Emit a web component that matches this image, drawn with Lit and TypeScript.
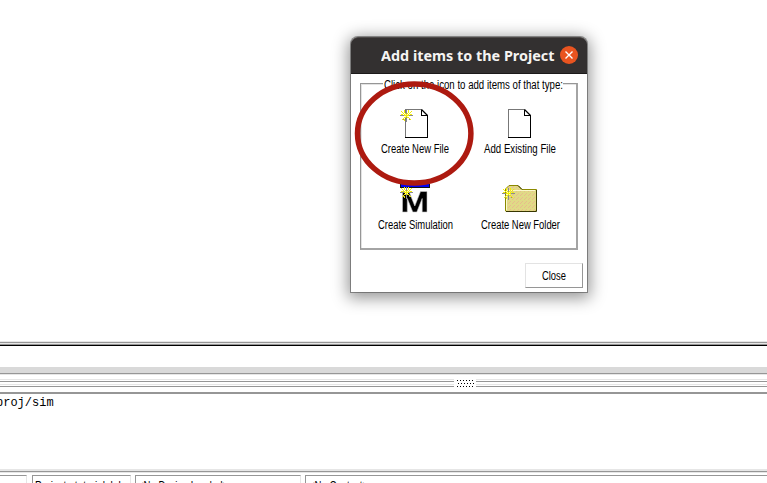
import { LitElement, html, css, svg } from "lit";
import { customElement } from "lit/decorators.js";

const star = (x: number, y: number) => svg`
  <g transform="translate(${x} ${y})" shape-rendering="crispEdges">
    <path d="M6 1h1v4h-1zM6 8h1v5h-1zM0 6h4v1h-4zM9 6h4v1h-4zM2 3h1v1h-1zM10 3h1v1h-1zM3 10h1v1h-1zM9 10h1v1h-1z" fill="#8c8c8c" />
    <path d="M1 2h1v1h1v1h1v1h1v1h-1v-1h-1v-1h-1v-1h-1zM11 2h1v1h-1v1h-1v1h-1v1h-1v-1h1v-1h1v-1h1zM2 10h1v-1h1v-1h1v1h-1v1h-1v1h-1zM8 8h1v1h1v1h1v1h-1v-1h-1v-1h-1zM4 1h1v3h-1zM8 1h1v3h-1zM5 4h1v1h-1zM7 4h1v1h-1zM4 6h5v1h-5zM6 5h1v3h-1zM5 8h1v1h-1zM7 8h1v1h-1zM1 5h2v1h-2zM10 5h2v1h-2zM4 10h1v2h-1z" fill="#f4ee00" />
    <path d="M5 5h1v1h-1zM7 5h1v1h-1zM5 7h1v1h-1zM7 7h1v1h-1z" fill="#fffbb0" />
  </g>`;

const page = (x: number) => svg`
  <g transform="translate(${x} 0)">
    <path d="M.5 28.500V.5H16.500l6 6v22z" fill="#fff" />
    <path d="M.5 28V.5H17" fill="none" stroke="#777" shape-rendering="crispEdges" />
    <path d="M0 28.500h23M22.500 6v23M16.500 1v5.500h6" fill="none" stroke="#000" shape-rendering="crispEdges" />
    <path d="M16.500 .5l6 6" stroke="#000" stroke-width="1.300" />
  </g>`;

const icons: Record<string, unknown> = {
  file: html`<svg width="36" height="30">${page(8)}${star(3, 0)}</svg>`,
  existing: html`<svg width="36" height="30">${page(6)}</svg>`,
  sim: html`<svg width="36" height="30">
    <path d="M3 -1h30v4H3z" fill="#111" /><path d="M4 -1h28v3H4z" fill="#0000f5" />
    <path d="M5.500 27V6.500h6.500l5.800 14.500 5.700-14.500h6.500V27h-4.800V13.500l-5.400 13.500h-4l-5.500-13.500v13.500z" fill="#000" stroke="#c8c8c8" stroke-width=".6" />
    ${star(3, 1)}
  </svg>`,
  folder: html`<svg width="36" height="30">
    <defs><pattern id="dither" width="4" height="4" patternUnits="userSpaceOnUse">
      <path d="M0 0h4v4H0z" fill="#e0da86" /><path d="M0 0h1v1H0zM2 2h1v1H2zM3 1h1v1H3z" fill="#e8bc8c" />
    </pattern></defs>
    <path d="M3.500 26V4L7 .5h9l4 4h14.500V25l-1 1.500h-29z" fill="url(#dither)" stroke="#8b8900" />
    <path d="M4.500 25V5.500H33" fill="none" stroke="#fbf9cc" />
    <path d="M16 .5l4 4M34.500 5v21.500H4" fill="none" stroke="#373600" />
    ${star(0, 2)}
  </svg>`,
};

@customElement("app-root")
export class AppRoot extends LitElement {
  static styles = css`
    :host { display: block; position: relative; width: 767px; height: 483px; overflow: hidden; background: #fff; color: #000; font: 12px "Liberation Sans", sans-serif; }
    .workspace { display: flex; flex-direction: column; height: 483px; }
    .upper { flex: 0 0 341px; }
    .edge { flex: 0 0 5px; background: linear-gradient(#e6e6e6 1px, #969696 1px 2px, #e6e6e6 2px 3px, #969696 3px 4px, #000 4px); }
    .tabs { flex: 0 0 21px; }
    .band { flex: 0 0 6px; background: #d9d9d9; border-bottom: 1px solid #969696; box-shadow: 0 1px #e6e6e6; }
    .sash { flex: 0 0 8px; margin: 5px 0; display: flex; background: linear-gradient(#e6e6e6 1px, #fff 1px 2px, #969696 2px 3px, #fff 3px 5px, #e6e6e6 5px 6px, #fff 6px 7px, #969696 7px); }
    .grip { margin-left: 454px; width: 22px; height: 8px; background: #fff; }
    .grip svg { display: block; overflow: visible; }
    .console { flex: 0 0 75px; border-top: 2px solid #969696; font: 12px/15px "Liberation Mono", monospace; }
    .prompt { display: block; margin: 2px 0 0 -4px; }
    .rule { flex: 0 0 4px; background: linear-gradient(#e6e6e6 2px, #969696 2px 3px, #e6e6e6 3px); }
    .status { display: flex; gap: 4px; padding-top: 2px; height: 8px; overflow: hidden; }
    .cell { box-sizing: border-box; height: 22px; border: 1px solid #969696; border-right-color: #e6e6e6; padding: 3px 0 0 2px; }
    .c0 { width: 27px; border-left: 0; margin-right: 1px; }
    .c1 { width: 99px; }
    .c2 { width: 166px; padding-left: 2px; }
    .c3 { flex: 1; border-right: 0; padding-left: 3px; }

    .dialog { position: absolute; left: 351px; top: 37px; width: 236px; height: 255px; border-radius: 7px 7px 0 0; background: #fff; box-shadow: 0 0 0 1px rgba(80,80,80,.6), 0 3px 16px 3px rgba(0,0,0,.42); }
    .title { height: 37px; box-sizing: border-box; background: #333030; border-radius: 7px 7px 0 0; border-top: 1px solid #4d4948; border-bottom: 1px solid #1c1a1a; display: flex; align-items: center; justify-content: flex-end; gap: 5px; padding-right: 9px; font: bold 14px "Noto Sans", sans-serif; }
    .close { display: block; position: relative; top: -1px; }
    .group { box-sizing: border-box; position: relative; margin: 9px 9px 0; height: 167px; border: 1px solid #969696; border-right-width: 2px; border-bottom-width: 2px; border-color: #969696 #a4a4a4 #a4a4a4 #969696; box-shadow: inset 1px 1px #e3e3e3; display: grid; grid-template-columns: 106px 104px; grid-template-rows: 76px 76px; padding: 25px 0 0 1px; }
    .legend { position: absolute; left: 22px; top: -6px; height: 14px; padding-left: 1px; background: #fff; }
    .t { display: block; overflow: visible; }
    .item { display: flex; flex-direction: column; align-items: center; }
    .item svg { display: block; overflow: visible; }
    .item .t { margin-top: 3px; }
    .button { box-sizing: border-box; width: 58px; height: 25px; margin: 13px 0 0 174px; border: 1px solid #969696; border-top-color: #e3e3e3; border-left-color: #e3e3e3; display: flex; align-items: center; justify-content: center; }
    .marker { position: absolute; left: 354px; top: 80px; }
  `;

  label(text: string, width: number) {
    return html`<svg class="t" width=${width} height="14"><text x="0" y="11" font-size="12" textLength=${width} lengthAdjust="spacingAndGlyphs">${text}</text></svg>`;
  }

  item(icon: string, text: string, width: number) {
    return html`<div class="item">${icons[icon]}${this.label(text, width)}</div>`;
  }

  render() {
    const dots = [[3, 1], [6, 1], [9, 1], [12, 1], [15, 1], [18, 1], [4, 4], [7, 4], [10, 4], [13, 4], [16, 4], [19, 4], [3, 7], [6, 7], [9, 7], [12, 7], [15, 7], [18, 7]];
    return html`
      <div class="workspace">
        <div class="upper"></div>
        <div class="edge"></div>
        <div class="tabs"></div>
        <div class="band"></div>
        <div class="sash"><div class="grip"><svg width="22" height="8">${dots.map(([x, y]) => svg`<rect x=${x} y=${y} width="1" height="1" />`)}</svg></div></div>
        <div class="console"><span class="prompt">proj/sim</span></div>
        <div class="rule"></div>
        <div class="status">
          <div class="cell c0"></div>
          <div class="cell c1">${this.label("Project : tutorial_lab", 89)}</div>
          <div class="cell c2">${this.label("<No Design Loaded>", 90)}</div>
          <div class="cell c3">${this.label("<No Context>", 59)}</div>
        </div>
      </div>
      <div class="dialog">
        <div class="title"><svg width="174" height="20"><text x="0" y="15" fill="#f5f4f2" textLength="173.500" lengthAdjust="spacingAndGlyphs">Add items to the Project</text></svg>
          <svg class="close" width="18" height="18"><circle cx="9" cy="9" r="9" fill="#e95420" /><path d="M5.500 5.500l7 7M12.500 5.500l-7 7" stroke="#fff" stroke-width="1.4" /></svg>
        </div>
        <div class="group">
          <div class="legend">${this.label("Click on the icon to add items of that type:", 179)}</div>
          ${this.item("file", "Create New File", 68)}
          ${this.item("existing", "Add Existing File", 72)}
          ${this.item("sim", "Create Simulation", 75)}
          ${this.item("folder", "Create New Folder", 79)}
        </div>
        <div class="button">${this.label("Close", 24)}</div>
      </div>
      <svg class="marker" width="120" height="107"><ellipse cx="60.200" cy="53.500" rx="56.700" ry="49.500" fill="none" stroke="#ad1a10" stroke-width="5.500" /></svg>
    `;
  }
}
